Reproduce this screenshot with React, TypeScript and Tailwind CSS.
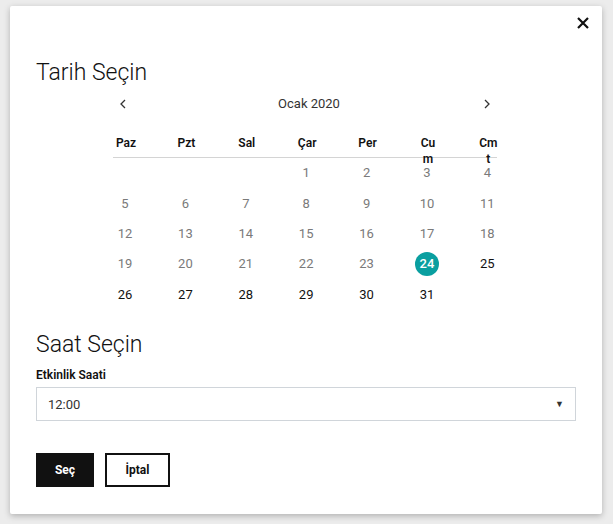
import React from "react";

const days: (number | null)[] = [null, null, null, 1, 2, 3, 4];
for (let d = 5; d <= 31; d++) days.push(d);

export default function App() {
  const heads = [["Paz"], ["Pzt"], ["Sal"], ["Çar"], ["Per"], ["Cu", "m"], ["Cm", "t"]];
  return (
    <div className="w-[613px] h-[524px] bg-[#ececec] pt-[6px] pl-[10px]" style={{ fontFamily: "Roboto, 'Liberation Sans', sans-serif" }}>
      <div className="relative w-[592px] h-[508px] bg-white shadow-[0_2px_6px_rgba(0,0,0,0.25)] rounded-[2px] px-[26px]">
        <button className="absolute right-[12px] top-[10px] text-[#111]">
          <svg width="14" height="14" viewBox="0 0 14 14"><path d="M2 2L12 12M12 2L2 12" stroke="#111" strokeWidth="2.2" /></svg>
        </button>
        <div className="pt-[52px] text-[23px] font-light text-[#111] leading-[30px]">Tarih Seçin</div>
        <div className="ml-[77px] w-[384px]">
          <div className="flex justify-between items-center h-[20px] mt-[6px] px-[6px] text-[#333]">
            <svg width="8" height="10" viewBox="0 0 8 10"><path d="M6 1L2 5L6 9" stroke="#333" strokeWidth="1.3" fill="none" /></svg>
            <span className="text-[13px] ml-[8px]">Ocak 2020</span>
            <svg width="8" height="10" viewBox="0 0 8 10"><path d="M2 1L6 5L2 9" stroke="#333" strokeWidth="1.3" fill="none" /></svg>
          </div>
          <div className="grid grid-cols-[repeat(7,60.4px)] mt-[19px] border-b border-[#d4d4d4] h-[25px]">
            {heads.map((h, i) => (
              <div key={i} className="w-[26px] text-center text-[12px] font-semibold text-[#111] leading-[16px] pt-[2px] h-[25px] overflow-visible relative z-10">
                {h.map((l, j) => <div key={j}>{l}</div>)}
              </div>
            ))}
          </div>
          <div className="grid grid-cols-[repeat(7,60.4px)]">
            {days.map((d, i) => (
              <div key={i} className="h-[30.3px] flex items-center">
                {d !== null && (
                  <div className={"w-[24px] h-[24px] flex items-center justify-center text-[13px] " + (d === 24 ? "rounded-full bg-[#0a9fa0] text-white font-medium" : d > 24 ? "text-[#111]" : "text-[#7a7a7a]")}>
                    {d}
                  </div>
                )}
              </div>
            ))}
          </div>
        </div>
        <div className="mt-[21px] text-[23px] font-light text-[#111] leading-[30px]">Saat Seçin</div>
        <div className="mt-[6px] text-[12px] font-semibold text-[#111]">Etkinlik Saati</div>
        <div className="mt-[3px] h-[34px] border border-[#d0d5da] flex items-center justify-between px-[11px] text-[13px] text-[#333]">
          <span>12:00</span>
          <span className="text-[9px] text-[#333]">▼</span>
        </div>
        <div className="mt-[32px] flex gap-[11px]">
          <button className="w-[58px] h-[34px] bg-[#111] text-white text-[12px] font-bold">Seç</button>
          <button className="w-[65px] h-[34px] border-2 border-[#111] text-[#111] text-[12px] font-bold">İptal</button>
        </div>
      </div>
    </div>
  );
}
